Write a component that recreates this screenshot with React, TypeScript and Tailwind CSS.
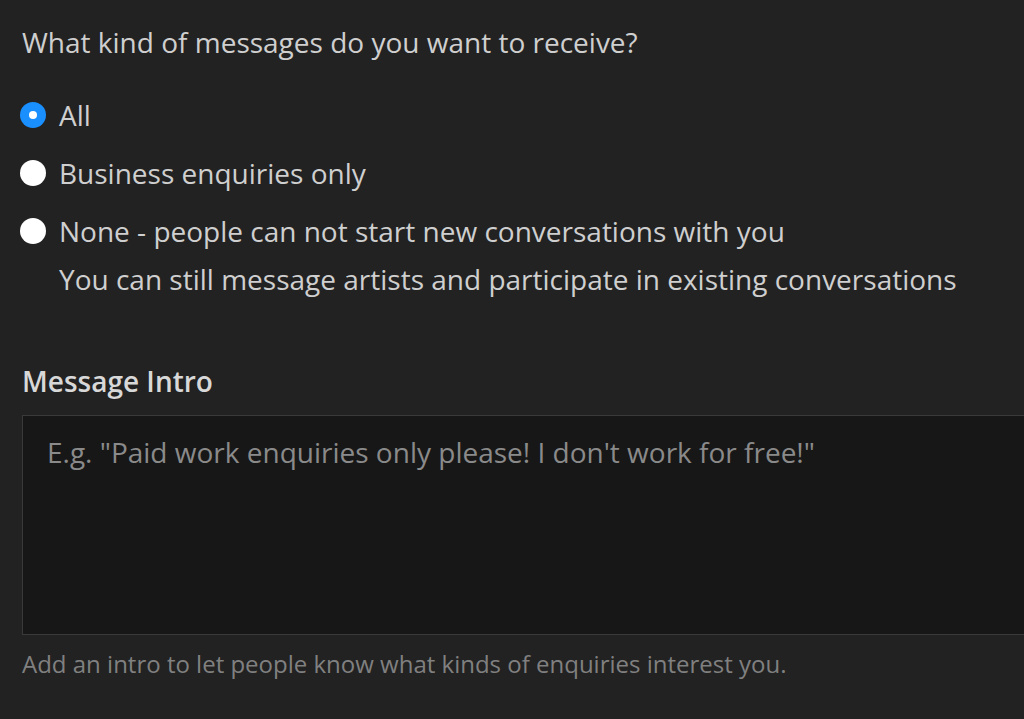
import React, { useState } from 'react';

const options = [
  { id: 'all', label: 'All' },
  { id: 'business', label: 'Business enquiries only' },
  {
    id: 'none',
    label: 'None - people can not start new conversations with you',
    note: 'You can still message artists and participate in existing conversations',
  },
];

const Radio: React.FC<{ checked: boolean }> = ({ checked }) =>
  checked ? (
    <span className="flex h-[26px] w-[26px] shrink-0 items-center justify-center rounded-full bg-[#1a8fff]">
      <span className="block h-[8px] w-[8px] rounded-full bg-white" />
    </span>
  ) : (
    <span className="block h-[26px] w-[26px] shrink-0 rounded-full bg-white" />
  );

export default function App() {
  const [choice, setChoice] = useState('all');

  return (
    <div className="h-[719px] w-[1024px] overflow-hidden bg-[#222222] pl-[22px] pt-[24px] font-['Open_Sans',sans-serif] text-[#cfcfcf]">
      <p className="text-[28px] leading-[36px]">What kind of messages do you want to receive?</p>

      <div className="mt-[37px] flex flex-col gap-[22px]">
        {options.map((o) => (
          <label key={o.id} className="-ml-[2px] flex cursor-pointer items-start gap-[13px]" onClick={() => setChoice(o.id)}>
            <span className="block shrink-0 pt-[5px]">
              <Radio checked={choice === o.id} />
            </span>
            <span className="flex flex-col text-[28px] leading-[36px]">
              <span>{o.label}</span>
              {o.note && <span className="mt-[12px]">{o.note}</span>}
            </span>
          </label>
        ))}
      </div>

      <h3 className="mt-[66px] text-[28px] font-semibold leading-[36px] text-[#d8d8d8]">Message Intro</h3>

      <textarea
        className="mt-[16px] block h-[220px] w-[1020px] resize-none border border-[#3a3a3a] bg-[#171717] px-[24px] py-[18px] text-[28px] leading-[36px] text-[#cfcfcf] outline-none placeholder:text-[#8a8a8a]"
        placeholder={'E.g. "Paid work enquiries only please! I don\'t work for free!"'}
      />

      <p className="mt-[14px] text-[24px] leading-[30px] text-[#808080]">
        Add an intro to let people know what kinds of enquiries interest you.
      </p>
    </div>
  );
}
